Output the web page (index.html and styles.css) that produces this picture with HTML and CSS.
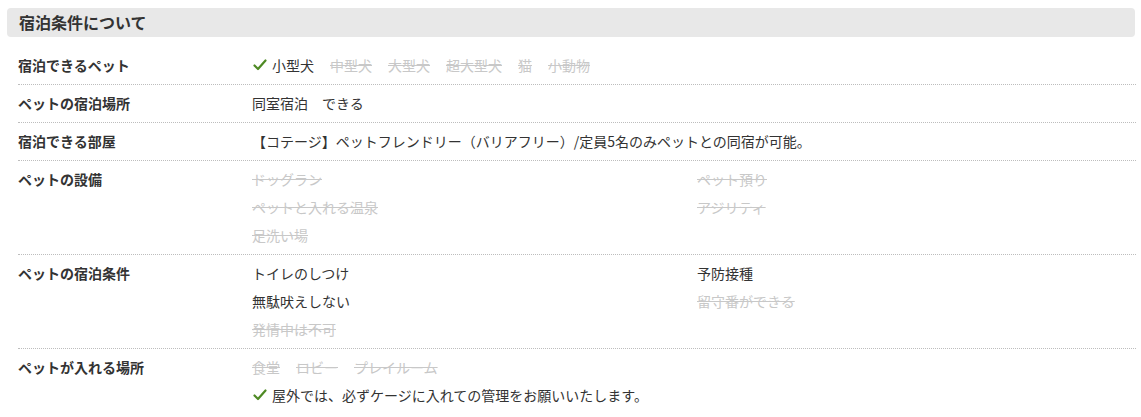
FILE: index.html
```
<!DOCTYPE html>
<html lang="ja">
<head>
<meta charset="utf-8">
<link rel="stylesheet" href="styles.css">
</head>
<body>
<div class="page">
  <h2 class="section-title">宿泊条件について</h2>
  <dl class="cond">
    <div class="row">
      <dt class="label">宿泊できるペット</dt>
      <dd class="value">
        <div class="inline">
          <span class="item ok"><svg class="check" viewBox="0 0 14 12" width="14" height="12"><path d="M1.5 6.5 L5 10 L12.5 1.5" fill="none" stroke="#4e8a24" stroke-width="2.2" stroke-linecap="round" stroke-linejoin="round"/></svg>小型犬</span>
          <span class="item off">中型犬</span>
          <span class="item off">大型犬</span>
          <span class="item off">超大型犬</span>
          <span class="item off">猫</span>
          <span class="item off">小動物</span>
        </div>
      </dd>
    </div>
    <div class="row">
      <dt class="label">ペットの宿泊場所</dt>
      <dd class="value"><div class="line">同室宿泊　できる</div></dd>
    </div>
    <div class="row">
      <dt class="label">宿泊できる部屋</dt>
      <dd class="value"><div class="line">【コテージ】ペットフレンドリー（バリアフリー）/定員5名のみペットとの同宿が可能。</div></dd>
    </div>
    <div class="row">
      <dt class="label">ペットの設備</dt>
      <dd class="value">
        <div class="grid">
          <span class="off">ドッグラン</span>
          <span class="off">ペット預り</span>
          <span class="off">ペットと入れる温泉</span>
          <span class="off">アジリティ</span>
          <span class="off">足洗い場</span>
        </div>
      </dd>
    </div>
    <div class="row">
      <dt class="label">ペットの宿泊条件</dt>
      <dd class="value">
        <div class="grid">
          <span>トイレのしつけ</span>
          <span>予防接種</span>
          <span>無駄吠えしない</span>
          <span class="off">留守番ができる</span>
          <span class="off">発情中は不可</span>
        </div>
      </dd>
    </div>
    <div class="row last">
      <dt class="label">ペットが入れる場所</dt>
      <dd class="value">
        <div class="inline">
          <span class="item off">食堂</span>
          <span class="item off">ロビー</span>
          <span class="item off">プレイルーム</span>
        </div>
        <div class="line ok"><svg class="check" viewBox="0 0 14 12" width="14" height="12"><path d="M1.5 6.5 L5 10 L12.5 1.5" fill="none" stroke="#4e8a24" stroke-width="2.2" stroke-linecap="round" stroke-linejoin="round"/></svg>屋外では、必ずケージに入れての管理をお願いいたします。</div>
      </dd>
    </div>
  </dl>
</div>
</body>
</html>
```
FILE: styles.css
```
* { box-sizing: border-box; }
html, body { margin: 0; padding: 0; background: #fff; }
body {
  font-family: "Noto Sans CJK JP", "Noto Sans", sans-serif;
  color: #333;
  font-size: 14px;
}
.page {
  padding: 8px 5px 0 7px;
}
.section-title {
  margin: 0;
  height: 29px;
  line-height: 29px;
  padding-left: 12px;
  margin-right: 1px;
  background: #e8e8e8;
  border-radius: 4px;
  font-size: 16px;
  font-weight: bold;
  color: #333;
}
.cond {
  margin: 10px 0 0 11px;
  padding: 0;
}
.row {
  display: flex;
  padding: 4px 0 5px;
  border-bottom: 1px dotted #bdbdbd;
}
.row.last { border-bottom: none; }
.label {
  width: 234px;
  flex: none;
  margin: 0;
  font-weight: bold;
  line-height: 28px;
}
.value {
  margin: 0;
  flex: 1;
  line-height: 28px;
}
.inline {
  display: flex;
  gap: 16px;
}
.item { display: inline-flex; align-items: center; }
.grid {
  display: grid;
  grid-template-columns: 445px 1fr;
}
.off {
  color: #c8c8c8;
  text-decoration: line-through;
}
.ok { display: flex; align-items: center; }
.check {
  margin: 0 5px 0 1px;
  flex: none;
}
```
